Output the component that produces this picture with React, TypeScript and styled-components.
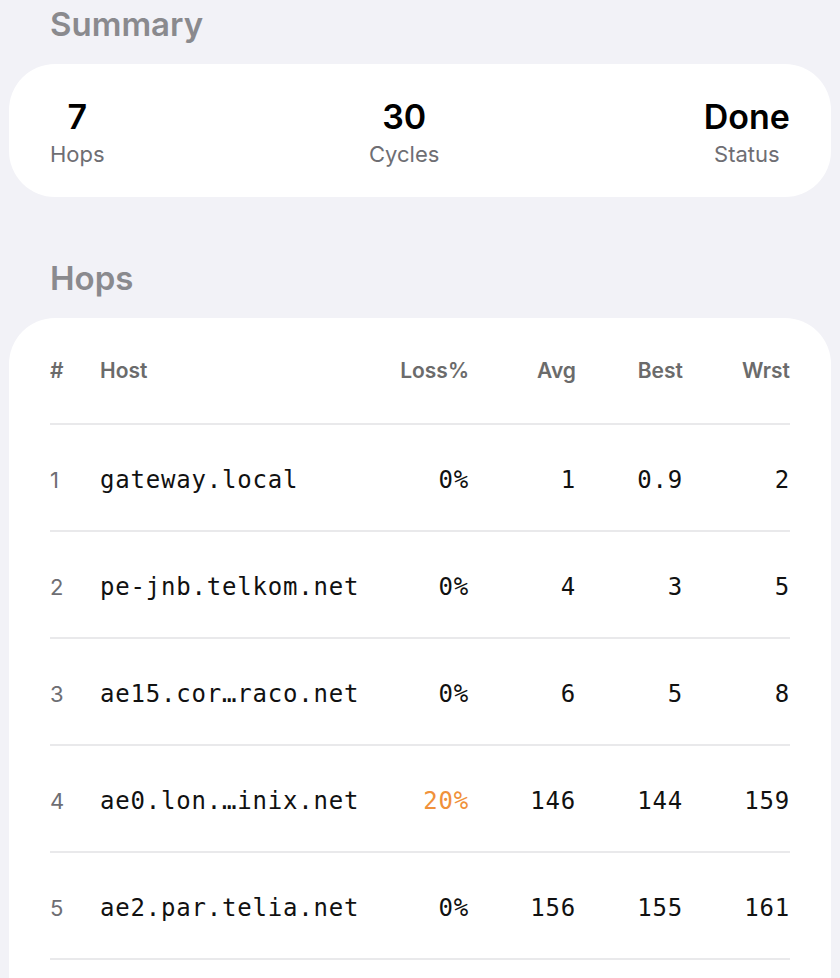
import React from "react";
import styled, { createGlobalStyle } from "styled-components";

const Global = createGlobalStyle`
  html, body { margin: 0; padding: 0; background: #f2f2f7; }
  body { font-family: Inter, "Noto Sans", sans-serif; -webkit-font-smoothing: antialiased; }
`;

const Page = styled.div`
  padding: 0 9px;
  display: flex;
  flex-direction: column;
`;

const SectionTitle = styled.h2<{ $top: number }>`
  margin: ${(p) => p.$top}px 0 0 41px;
  font-size: 33px;
  line-height: 40px;
  font-weight: 600;
  color: #8a8a8e;
  height: 40px;
`;

const Card = styled.div<{ $mt: number }>`
  margin-top: ${(p) => p.$mt}px;
  background: #ffffff;
  border-radius: 46px;
  padding: 0 41px;
`;

const SummaryRow = styled.div`
  display: flex;
  justify-content: space-between;
  align-items: center;
  height: 133px;
`;

const Stat = styled.div`
  display: flex;
  flex-direction: column;
  align-items: center;
  padding-top: 4px;
`;

const StatValue = styled.div`
  font-size: 34px;
  line-height: 40px;
  font-weight: 600;
  color: #000;
`;

const StatLabel = styled.div`
  font-size: 22px;
  line-height: 28px;
  color: #6e6e73;
  margin-top: 3px;
`;

const Grid = styled.div`
  display: grid;
  grid-template-columns: 50px 1fr 107px 107px 107px 107px;
  padding-bottom: 80px;
`;

const HeadCell = styled.div<{ $right?: boolean }>`
  display: flex;
  align-items: center;
  justify-content: ${(p) => (p.$right ? "flex-end" : "flex-start")};
  font-size: 21px;
  font-weight: 600;
  color: #6b6b6b;
  border-bottom: 2px solid #e9e9eb;
  padding-bottom: 1px;
  box-sizing: border-box;
  height: 107px;
`;

const Cell = styled.div<{ $right?: boolean; $warn?: boolean }>`
  height: 107px;
  box-sizing: border-box;
  border-bottom: 2px solid #e9e9eb;
  display: flex;
  align-items: center;
  justify-content: ${(p) => (p.$right ? "flex-end" : "flex-start")};
  font-family: "DejaVu Sans Mono", "Liberation Mono", monospace;
  font-size: 24px;
  letter-spacing: 0.8px;
  color: ${(p) => (p.$warn ? "#f0913a" : "#111")};
  white-space: nowrap;
  overflow: hidden;
  padding-top: 4px;
`;

const IndexCell = styled(Cell)`
  font-family: Inter, "Noto Sans", sans-serif;
  font-size: 22px;
  letter-spacing: 0;
  color: #6e6e73;
`;

const hops = [
  { n: 1, host: "gateway.local", loss: "0%", avg: "1", best: "0.9", wrst: "2" },
  { n: 2, host: "pe-jnb.telkom.net", loss: "0%", avg: "4", best: "3", wrst: "5" },
  { n: 3, host: "ae15.cor…raco.net", loss: "0%", avg: "6", best: "5", wrst: "8" },
  { n: 4, host: "ae0.lon.…inix.net", loss: "20%", avg: "146", best: "144", wrst: "159" },
  { n: 5, host: "ae2.par.telia.net", loss: "0%", avg: "156", best: "155", wrst: "161" },
];

export default function App() {
  return (
    <>
      <Global />
      <Page>
        <SectionTitle $top={4}>Summary</SectionTitle>
        <Card $mt={20}>
          <SummaryRow>
            <Stat>
              <StatValue>7</StatValue>
              <StatLabel>Hops</StatLabel>
            </Stat>
            <Stat>
              <StatValue>30</StatValue>
              <StatLabel>Cycles</StatLabel>
            </Stat>
            <Stat>
              <StatValue>Done</StatValue>
              <StatLabel>Status</StatLabel>
            </Stat>
          </SummaryRow>
        </Card>
        <SectionTitle $top={61}>Hops</SectionTitle>
        <Card $mt={20}>
          <Grid>
            <HeadCell>#</HeadCell>
            <HeadCell>Host</HeadCell>
            <HeadCell $right>Loss%</HeadCell>
            <HeadCell $right>Avg</HeadCell>
            <HeadCell $right>Best</HeadCell>
            <HeadCell $right>Wrst</HeadCell>
            {hops.map((h) => (
              <React.Fragment key={h.n}>
                <IndexCell>{h.n}</IndexCell>
                <Cell>{h.host}</Cell>
                <Cell $right $warn={h.loss !== "0%"}>{h.loss}</Cell>
                <Cell $right>{h.avg}</Cell>
                <Cell $right>{h.best}</Cell>
                <Cell $right>{h.wrst}</Cell>
              </React.Fragment>
            ))}
          </Grid>
        </Card>
      </Page>
    </>
  );
}
